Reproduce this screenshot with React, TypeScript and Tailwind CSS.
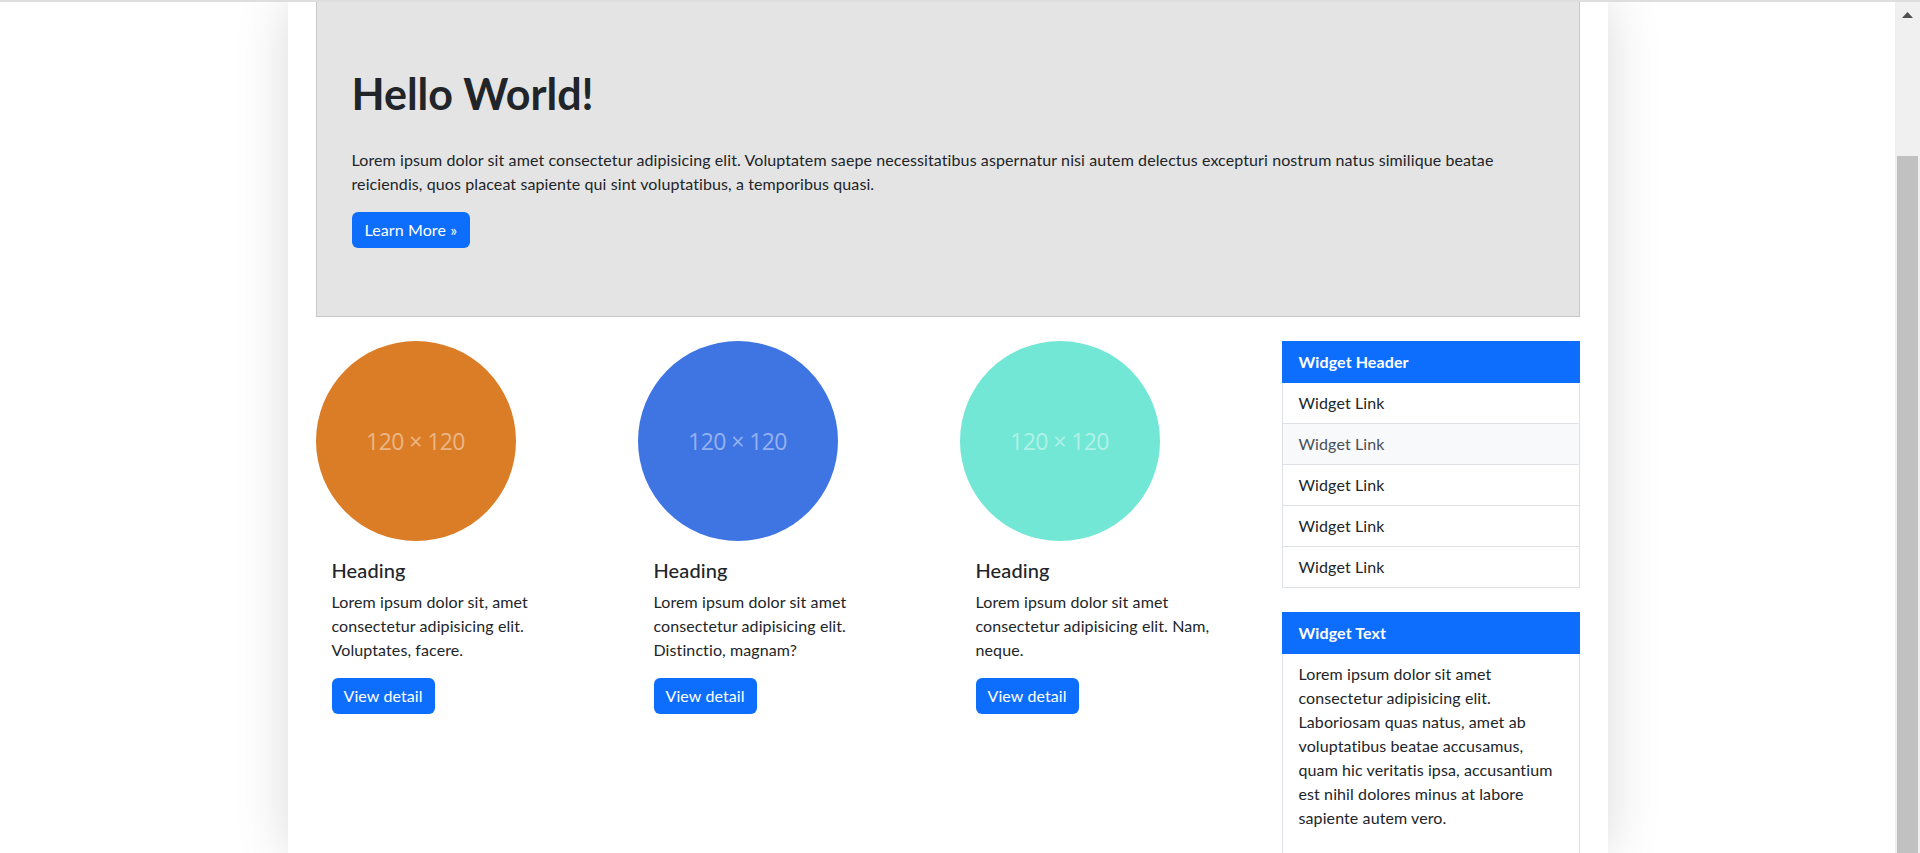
import React from "react";

const cols = [
  {
    color: "bg-[#db7d26]",
    text: "Lorem ipsum dolor sit, amet consectetur adipisicing elit. Voluptates, facere.",
  },
  {
    color: "bg-[#3f74e3]",
    text: "Lorem ipsum dolor sit amet consectetur adipisicing elit. Distinctio, magnam?",
  },
  {
    color: "bg-[#72e7d5]",
    text: "Lorem ipsum dolor sit amet consectetur adipisicing elit. Nam, neque.",
  },
];

function Feature({ color, text }: { color: string; text: string }) {
  return (
    <div>
      <div className={`w-[200px] h-[200px] rounded-full ${color} flex items-center justify-center`}>
        <span className="text-[23px] text-white/45 font-['Open_Sans',sans-serif] tracking-tight">120 × 120</span>
      </div>
      <div className="p-4">
        <h5 className="text-xl font-medium leading-[1.2] mb-2 pt-[1px]">Heading</h5>
        <p className="leading-6 mb-4">{text}</p>
        <button className="bg-[#0d6efd] text-white rounded-[6px] px-3 py-1.5 leading-6">View detail</button>
      </div>
    </div>
  );
}

function Sidebar() {
  return (
    <div>
      <div className="mb-6">
        <div className="bg-[#0d6efd] border border-[#0d6efd] text-white font-bold px-4 py-2 leading-6">Widget Header</div>
        {[0, 1, 2, 3, 4].map(i => (
          <div
            key={i}
            className={`border-x border-b border-[#dee2e6] px-4 py-2 leading-6 ${i === 1 ? "bg-[#f8f9fa] text-[#495057]" : "bg-white"}`}
          >
            Widget Link
          </div>
        ))}
      </div>
      <div>
        <div className="bg-[#0d6efd] border border-[#0d6efd] text-white font-bold px-4 py-2 leading-6">Widget Text</div>
        <div className="border-x border-b border-[#dee2e6] px-4 pt-2 pb-2">
          <p className="leading-6 mb-4">
            Lorem ipsum dolor sit amet consectetur adipisicing elit. Laboriosam quas natus, amet ab voluptatibus beatae
            accusamus, quam hic veritatis ipsa, accusantium est nihil dolores minus at labore sapiente autem vero.
          </p>
        </div>
      </div>
    </div>
  );
}

export default function App() {
  return (
    <div className="h-[853px] overflow-hidden flex flex-col bg-white text-[#212529] text-base tracking-[0.1px] font-['Lato',sans-serif]">
      <div className="h-[2px] bg-[#dedede] shrink-0" />
      <div className="flex flex-1 min-h-0">
        <main className="flex-1 min-w-0 overflow-hidden">
          <div className="mx-auto w-[1320px] h-full bg-white shadow-[0_0_50px_rgba(0,0,0,0.15)] px-[28px]">
            <section className="bg-[#e4e4e4] border-x border-b border-[#c8c8c8] pt-[68px] pb-[68px] px-[35px]">
              <h1 className="text-[43px] font-bold leading-[48px] tracking-normal mb-[30px]">Hello World!</h1>
              <p className="leading-6 mb-4">
                Lorem ipsum dolor sit amet consectetur adipisicing elit. Voluptatem saepe necessitatibus aspernatur nisi
                autem delectus excepturi nostrum natus similique beatae reiciendis, quos placeat sapiente qui sint
                voluptatibus, a temporibus quasi.
              </p>
              <button className="bg-[#0d6efd] text-white rounded-[6px] px-[13px] py-1.5 leading-6">Learn More »</button>
            </section>
            <div className="grid grid-cols-4 gap-6 mt-6">
              {cols.map((c, i) => (
                <Feature key={i} color={c.color} text={c.text} />
              ))}
              <Sidebar />
            </div>
          </div>
        </main>
        <div className="w-[25px] shrink-0 bg-[#f0f0f0] flex flex-col items-center">
          <svg width="11" height="6" viewBox="0 0 11 6" className="mt-[10px]">
            <polygon points="5.5,0 11,6 0,6" fill="#505050" />
          </svg>
          <div className="mt-[138px] w-[21px] flex-1 bg-[#c1c1c1]" />
        </div>
      </div>
    </div>
  );
}
